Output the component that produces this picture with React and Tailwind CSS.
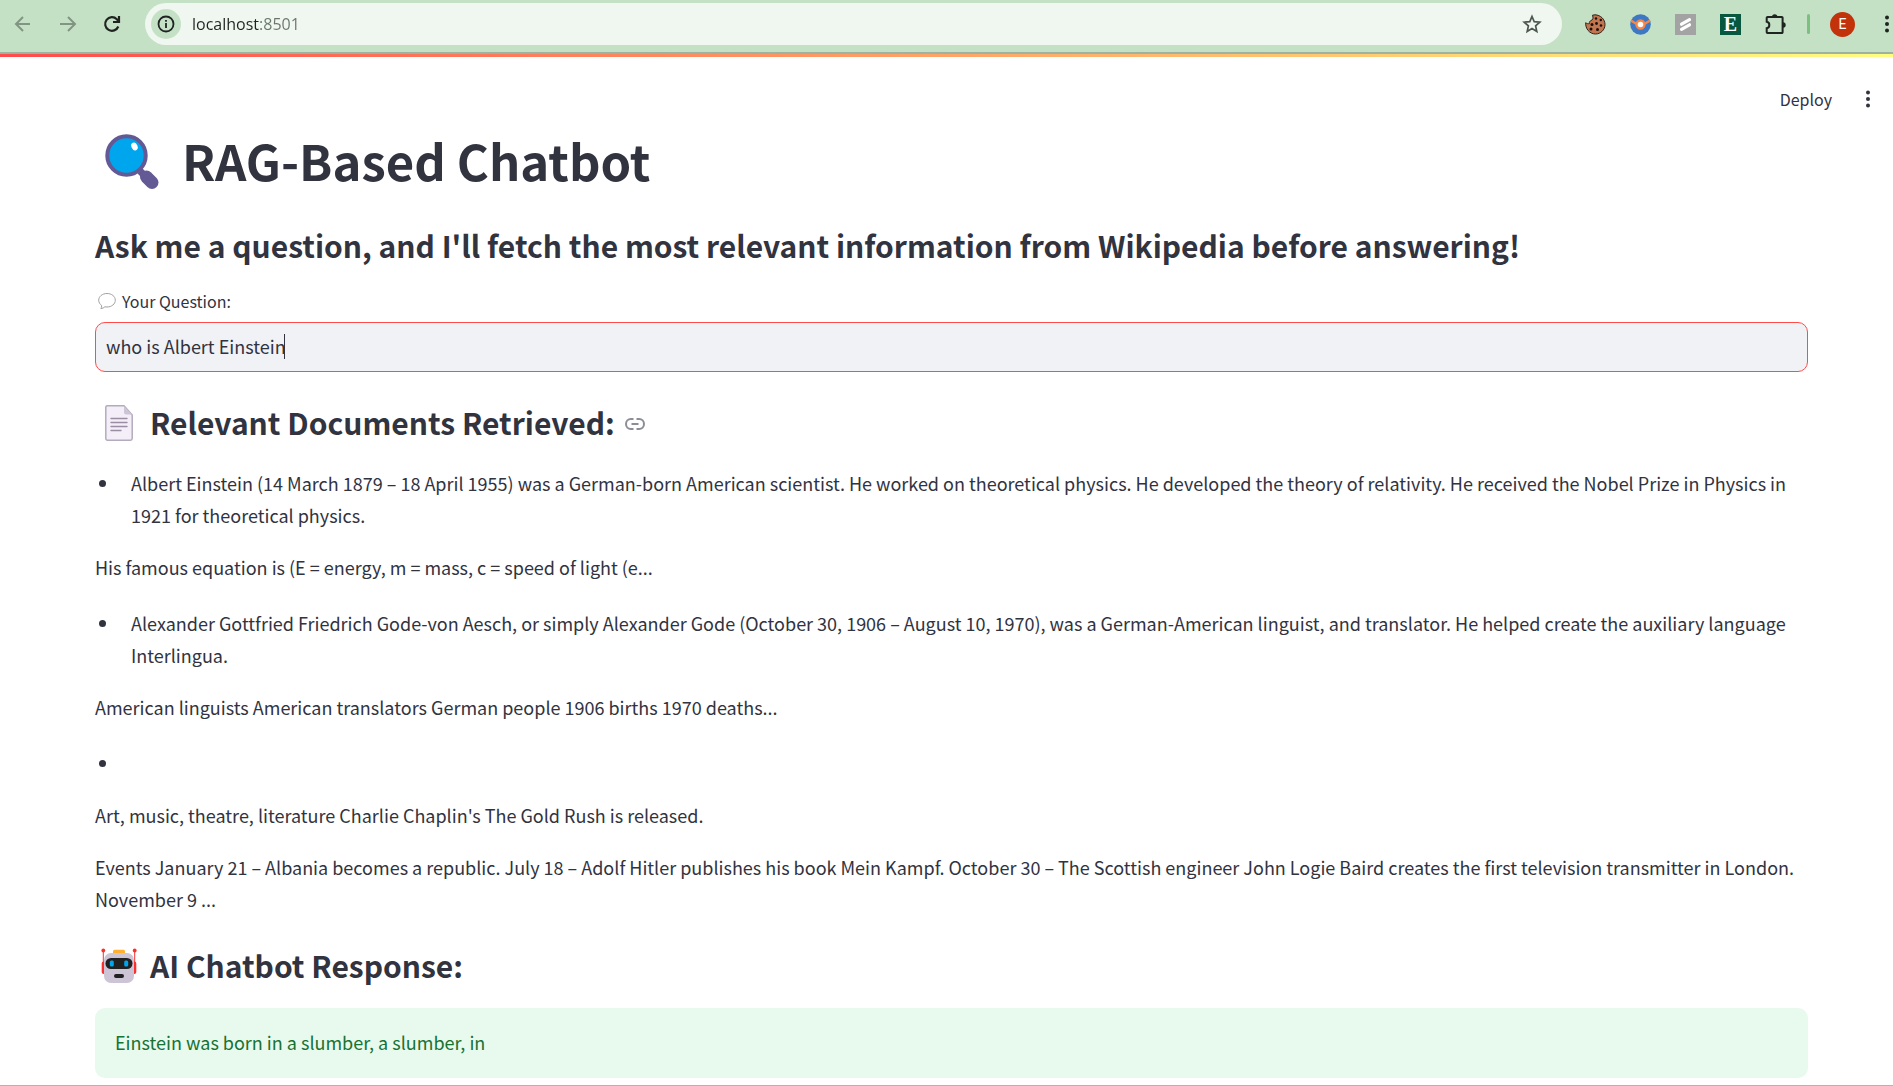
function Magnifier() {
  return (
    <svg className="ml-[10px] mr-[21px] mt-0.5 h-[58px] w-[56px] shrink-0" viewBox="0 0 56 58" aria-hidden="true">
      <path d="M35 39l5 5" stroke="#635994" strokeWidth="7" />
      <path d="M41.500 45l5.500 5.500" stroke="#635994" strokeWidth="13" strokeLinecap="round" />
      <circle cx="21.500" cy="23.500" r="19.200" fill="#00a6ed" stroke="#635994" strokeWidth="4" />
      <ellipse cx="29.500" cy="14.500" rx="3" ry="4" fill="#fff" transform="rotate(-25 29.500 14.500)" />
    </svg>
  );
}

function Bubble() {
  return (
    <svg className="ml-[3px] mr-[6px] h-[18px] w-[18px] shrink-0" viewBox="0 0 18 18" fill="none" stroke="#a0a0a0" strokeWidth="1" aria-hidden="true">
      <path d="M9 1.500C4.300 1.500.7 4.500.7 8.200c0 2.200 1.200 4.100 3 5.300-.1 1.300-.4 2.300-.8 3.100 1.600-.2 3-.8 4-1.800.7.100 1.400.200 2.100.200 4.700 0 8.300-3 8.300-6.800S13.700 1.500 9 1.500z" />
    </svg>
  );
}

function PageIcon() {
  return (
    <svg className="ml-[10px] mr-[17px] mt-0.5 h-[36px] w-[28px] shrink-0" viewBox="0 0 28 36" aria-hidden="true">
      <path d="M2 .8h17L27.200 10v23.500a1.700 1.700 0 0 1-1.700 1.700h-23A1.700 1.700 0 0 1 .8 33.500V2.500A1.700 1.700 0 0 1 2 .8z" fill="#f3eef8" stroke="#b4acbc" strokeWidth="1.500" />
      <path d="M19 1v6.500A2 2 0 0 0 21 9.500h6z" fill="#cdc4d6" />
      <path d="M6 13.500h16M6 17.500h16M6 21.500h16M6 25.500h10" stroke="#998ea4" strokeWidth="1.400" strokeLinecap="round" />
    </svg>
  );
}

function Robot() {
  return (
    <svg className="ml-[6px] mr-[13px] mt-0.5 h-[36px] w-[36px] shrink-0" viewBox="0 0 36 36" aria-hidden="true">
      <path d="M2.300 3v16M33.700 3v16" stroke="#f8312f" strokeWidth="1" />
      <circle cx="2.300" cy="2.500" r="1.900" fill="#f8312f" />
      <circle cx="33.700" cy="2.500" r="1.900" fill="#f8312f" />
      <rect x=".7" y="13.500" width="4" height="12.500" rx="2" fill="#f8312f" />
      <rect x="31.300" y="13.500" width="4" height="12.500" rx="2" fill="#f8312f" />
      <rect x="12" y="1.800" width="12" height="6" rx="1.500" fill="#ffb02e" />
      <rect x="3" y="5" width="30" height="30" rx="7" fill="#cdc4d6" />
      <rect x="4.500" y="10" width="27" height="11" rx="5.500" fill="#212121" />
      <rect x="8.800" y="12.500" width="4" height="6" rx="1.500" fill="#00a6ed" />
      <rect x="23.200" y="12.500" width="4" height="6" rx="1.500" fill="#00a6ed" />
      <rect x="13" y="26" width="10" height="4" rx="2" fill="#212121" />
    </svg>
  );
}

function LinkIcon() {
  return (
    <svg className="h-5 w-5" viewBox="0 0 20 20" fill="none" stroke="#8c8e97" strokeWidth="2" aria-hidden="true">
      <path d="M8.500 5H5.800a4.800 5 0 0 0 0 10h2.700M11.500 5h2.700a4.800 5 0 0 1 0 10h-2.700M6.500 10h7" />
    </svg>
  );
}

function Cookie() {
  return (
    <svg className="h-[21px] w-[21px]" viewBox="0 0 21 21">
      <path d="M7.500 1.200C8.500 4 8 6 6 6.500c-1 .5-2 1.500-1.500 3-1.500.5-3 0-3.800-.8C.2 14.500 4.500 20 10.500 20c5.300 0 9.500-4.300 9.500-9.500C20 5.200 15.500 1 10 .8z" fill="#c27650" stroke="#30211a" strokeWidth="1" />
      <g fill="#1c100c">
        <circle cx="11" cy="4.500" r="1.200" /><circle cx="15.800" cy="6" r="1.200" /><circle cx="11.500" cy="9.500" r="1.400" /><circle cx="16" cy="11.500" r="1.300" /><circle cx="7" cy="10.500" r="1.500" /><circle cx="6" cy="15" r="1.500" /><circle cx="12.500" cy="15.500" r="1.500" />
      </g>
    </svg>
  );
}

function Ball() {
  return (
    <svg className="h-[21px] w-[21px]" viewBox="0 0 21 21">
      <circle cx="10.500" cy="10.500" r="10.300" fill="#3c78c3" />
      <path d="M.8 6.500l6 3.500M20.200 6.500l-6 3.500" stroke="#f5874a" strokeWidth="2.600" />
      <circle cx="10.500" cy="10.500" r="4" fill="#fff" stroke="#f5874a" strokeWidth="2.400" />
    </svg>
  );
}

function Slashes() {
  return (
    <svg className="h-[21px] w-[21px]" viewBox="0 0 21 21">
      <rect width="21" height="21" fill="#a3a3a3" />
      <path d="M6.500 10.200l8-4.500M6.500 15.300l8-4.500" stroke="#fff" strokeWidth="3.200" strokeLinecap="round" />
    </svg>
  );
}

function Puzzle() {
  return (
    <svg className="h-[21px] w-[21px]" viewBox="0 0 21 21">
      <path d="M2.500 3h14.300a.8.8 0 0 1 .8.800v14.400a.8.8 0 0 1-.8.800H2.500a.8.8 0 0 1-.8-.8v-4c3.500-.5 3.500-6 0-6.500v-4a.8.8 0 0 1 .8-.7z" fill="none" stroke="#1f2420" strokeWidth="2" />
      <path d="M7 3a2.700 2.700 0 0 1 5.400 0zM18 8.300a2.700 2.700 0 0 1 0 5.400z" fill="#1f2420" />
    </svg>
  );
}

function Dots({ color }) {
  return (
    <svg className="h-[18px] w-1" viewBox="0 0 4 18" fill={color}>
      <circle cx="2" cy="2.500" r="2" /><circle cx="2" cy="9" r="2" /><circle cx="2" cy="15.500" r="2" />
    </svg>
  );
}

function BrowserBar() {
  return (
    <header className="flex h-[54px] items-center border-b-2 border-[#9db39f] bg-[#c5e1c5] pb-1 pr-1 font-['Open_Sans',sans-serif]">
      <button aria-label="Back" className="ml-[14px] h-[18px] w-[18px]">
        <svg viewBox="0 0 18 18" fill="none" stroke="#819582" strokeWidth="2"><path d="M16 9H2.500M9 2L2 9l7 7" /></svg>
      </button>
      <button aria-label="Forward" className="ml-[27px] h-[18px] w-[18px]">
        <svg viewBox="0 0 18 18" fill="none" stroke="#819582" strokeWidth="2"><path d="M1 9h14.500M9 2l7 7-7 7" /></svg>
      </button>
      <button aria-label="Reload" className="ml-[26px] h-[18px] w-[18px]">
        <svg viewBox="0 0 18 18" fill="none" stroke="#1f2420" strokeWidth="2.200"><path d="M15.300 11.500A6.800 6.800 0 1 1 13.800 4.200L15.500 6M16 1v6h-6" /></svg>
      </button>
      <div className="ml-6 mr-[23px] flex h-[42px] flex-1 items-center rounded-full bg-[#eff7f0] pl-[6px] pr-5">
        <button aria-label="Site information" className="flex h-[30px] w-[30px] items-center justify-center rounded-full bg-[#c5e1c5]">
          <svg className="h-[18px] w-[18px]" viewBox="0 0 18 18" fill="none" stroke="#1f2420" strokeWidth="1.800"><circle cx="9" cy="9" r="7.500" /><path d="M9 8v5M9 5v1.800" /></svg>
        </button>
        <input
          aria-label="Address"
          defaultValue="localhost:8501"
          className="ml-[11px] h-6 flex-1 bg-[linear-gradient(to_right,#1f2420_68px,#69756b_68px)] bg-clip-text text-[16px] leading-6 text-transparent outline-none"
        />
        <button aria-label="Bookmark" className="h-5 w-5">
          <svg viewBox="0 0 20 20" fill="none" stroke="#4d574e" strokeWidth="1.700"><path d="M10 2.500l2.200 5.200 5.600.5-4.200 3.700 1.200 5.500L10 14.500l-4.800 2.900 1.200-5.500L2.200 8.200l5.600-.5z" /></svg>
        </button>
      </div>
      <div className="flex items-center gap-6">
        <button aria-label="Cookie extension"><Cookie /></button>
        <button aria-label="Ball extension"><Ball /></button>
        <button aria-label="Slashes extension"><Slashes /></button>
        <button aria-label="E extension" className="h-[21px] w-[21px] bg-[#08573f] text-center font-['Liberation_Serif',serif] text-[20px] font-bold leading-[21px] text-white">E</button>
        <button aria-label="Extensions"><Puzzle /></button>
      </div>
      <div className="ml-[21px] h-5 w-[3px] rounded-full bg-[#7cc081]" />
      <button aria-label="Profile" className="ml-5 h-[25px] w-[25px] rounded-full bg-[#c2330c] font-[Roboto,sans-serif] text-[14px] leading-[25px] text-white">E</button>
      <button aria-label="Browser menu" className="ml-[30px]"><Dots color="#1f2420" /></button>
    </header>
  );
}

function Bullet({ children }) {
  return (
    <li className="mt-6 flex min-h-8 before:ml-1 before:mr-[25px] before:mt-[13px] before:h-[7px] before:w-[7px] before:shrink-0 before:rounded-full before:bg-[#31333f]">
      {children && <span>{children}</span>}
    </li>
  );
}

export default function App() {
  return (
    <div lang="en" className="min-h-screen bg-white font-['Noto_Sans_CJK_SC',sans-serif] text-[18px] leading-8 text-[#31333f]">
      <BrowserBar />
      <div className="h-[3px] bg-[linear-gradient(to_right,#ff4b4b,#fffd80)]" />
      <div className="flex h-[70px] items-start justify-end pr-[23px] pt-[26px]">
        <button className="h-8 text-[16px] leading-[30px]">Deploy</button>
        <button aria-label="Main menu" className="ml-[34px] flex h-8 items-center"><Dots color="#31333f" /></button>
      </div>
      <main className="px-[95px] pr-[85px]">
        <h1 className="flex items-center text-[49px] font-bold leading-[66px]"><Magnifier />RAG-Based Chatbot</h1>
        <h3 className="mt-[31px] text-[30px] font-bold leading-[42px]">
          Ask me a question, and I'll fetch the most relevant information from Wikipedia before answering!
        </h3>
        <label htmlFor="question" className="mt-[23px] flex items-center text-[16px] leading-6"><Bubble />Your Question:</label>
        <div className="relative mt-[9px]">
          <input
            id="question"
            defaultValue="who is Albert Einstein"
            className="block h-[50px] w-full rounded-[10px] border border-[#ff4b4b] bg-[#f0f2f6] px-[10px] pb-0.5 outline-none"
          />
          <span className="absolute left-[189px] top-3 h-[25px] w-px bg-[#31333f]" />
        </div>
        <h3 className="mt-[29px] flex items-center text-[30px] font-bold leading-[42px]">
          <PageIcon />Relevant Documents Retrieved:
          <a href="#relevant-documents" aria-label="Link to this section" className="ml-[10px] mt-1"><LinkIcon /></a>
        </h3>
        <ul>
          <Bullet>
            Albert Einstein (14 March 1879 – 18 April 1955) was a German-born American scientist. He worked on theoretical physics. He developed the theory of relativity. He received the Nobel Prize in Physics in 1921 for theoretical physics.
          </Bullet>
        </ul>
        <p className="mt-5">His famous equation is (E = energy, m = mass, c = speed of light (e...</p>
        <ul>
          <Bullet>
            Alexander Gottfried Friedrich Gode-von Aesch, or simply Alexander Gode (October 30, 1906 – August 10, 1970), was a German-American linguist, and translator. He helped create the auxiliary language Interlingua.
          </Bullet>
        </ul>
        <p className="mt-5">American linguists American translators German people 1906 births 1970 deaths...</p>
        <ul><Bullet /></ul>
        <p className="mt-5">Art, music, theatre, literature Charlie Chaplin's The Gold Rush is released.</p>
        <p className="mt-5">
          Events January 21 – Albania becomes a republic. July 18 – Adolf Hitler publishes his book Mein Kampf. October 30 – The Scottish engineer John Logie Baird creates the first television transmitter in London. November 9 ...
        </p>
        <h3 className="mt-[29px] flex items-center text-[30px] font-bold leading-[42px]"><Robot />AI Chatbot Response:</h3>
        <div className="mt-[22px] rounded-[10px] bg-[#e8f9ee] px-5 pb-5 pt-[18px] text-[#177233]">Einstein was born in a slumber, a slumber, in</div>
      </main>
      <div className="mt-[7px] h-px bg-[#b5b79b]" />
    </div>
  );
}
